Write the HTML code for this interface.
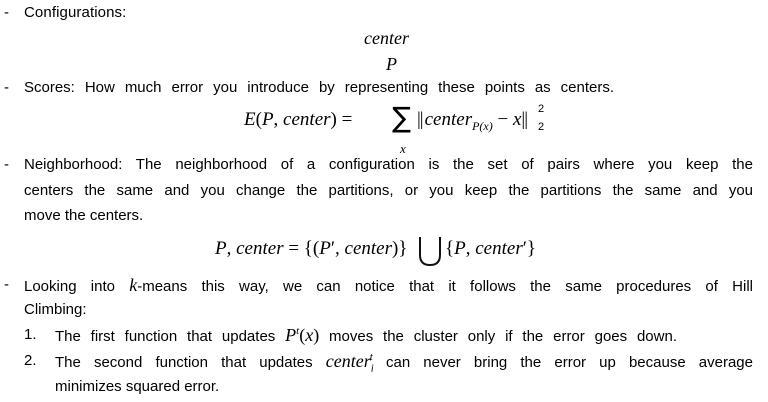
<!DOCTYPE html>
<html><head><meta charset="utf-8"><style>
body{margin:0;width:768px;height:402px;background:#fff;overflow:hidden;position:relative;font-family:"Liberation Sans",sans-serif;font-size:15px;color:#000}
.l{position:absolute;white-space:nowrap;line-height:20px}
.j{text-align:justify;text-align-last:justify;white-space:normal;overflow:hidden;height:22px}
.m{font-family:"Liberation Serif",serif;font-style:italic;font-size:18px}
.u{font-style:normal}
sup,sub{line-height:0}
.d{position:absolute;left:4px}
.n{font-style:normal;letter-spacing:-1px;margin-right:2px}
</style></head><body>
<div class="l d" style="top:3px">-</div>
<div class="l" style="left:24px;top:3px;letter-spacing:0.1px">Configurations:</div>
<div class="l m" style="left:364px;top:28px">center</div>
<div class="l m" style="left:386px;top:54px">P</div>
<div class="l d" style="top:78px">-</div>
<div class="l j" style="left:24px;top:78px;width:590px">Scores: How much error you introduce by representing these points as centers.</div>
<div class="l m" style="left:244px;top:110px;font-size:19px">E<span class="u">(</span>P<span class="u">,</span> center<span class="u">) =</span></div>
<div class="l" style="left:392px;top:101px;font-family:'DejaVu Sans',sans-serif;font-size:28px;line-height:34px">∑</div>
<div class="l m" style="left:400px;top:139px;font-size:13px">x</div>
<div class="l m" style="left:417px;top:110px;font-size:19px"><span class="n">||</span>center<sub style="font-size:12px">P(x)</sub> <span class="u">−</span> x<span class="n">||</span></div>
<div class="l" style="left:538px;top:99px;font-size:11px">2</div>
<div class="l" style="left:538px;top:117px;font-size:11px">2</div>
<div class="l d" style="top:155px">-</div>
<div class="l j" style="left:24px;top:155px;width:729px">Neighborhood: The neighborhood of a configuration is the set of pairs where you keep the</div>
<div class="l j" style="left:24px;top:181px;width:729px">centers the same and you change the partitions, or you keep the partitions the same and you</div>
<div class="l" style="left:24px;top:206px">move the centers.</div>
<div class="l m" style="left:215px;top:239px;font-size:19px">P<span class="u">,</span> center <span class="u">= {(</span>P<span class="u">′,</span> center<span class="u">)}</span></div>
<svg style="position:absolute;left:416px;top:235px" width="28" height="34"><path d="M4 2 V20 Q4 30 14 30 Q24 30 24 20 V2" fill="none" stroke="#111" stroke-width="2"/></svg>
<div class="l m" style="left:445px;top:239px;font-size:19px"><span class="u">{</span>P<span class="u">,</span> center<span class="u">′}</span></div>
<div class="l d" style="top:275px">-</div>
<div class="l j" style="left:24px;top:275px;width:729px">Looking into <span class="m">k</span>-means this way, we can notice that it follows the same procedures of Hill</div>
<div class="l" style="left:24px;top:300px">Climbing:</div>
<div class="l" style="left:24px;top:325px">1.</div>
<div class="l j" style="left:55px;top:325px;width:622px">The first function that updates <span class="m">P<sup style="font-size:11px">t</sup><span class="u">(</span>x<span class="u">)</span></span> moves the cluster only if the error goes down.</div>
<div class="l" style="left:24px;top:351px">2.</div>
<div class="l j" style="left:55px;top:351px;width:698px">The second function that updates <span class="m">center<sub style="font-size:11px">i</sub><sup style="font-size:11px;margin-left:-4px">t</sup></span> can never bring the error up because average</div>
<div class="l" style="left:55px;top:377px">minimizes squared error.</div>
</body></html>
